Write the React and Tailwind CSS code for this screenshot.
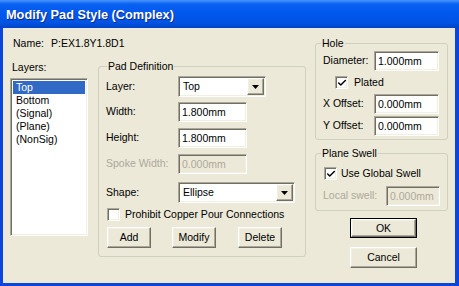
import { Check } from 'lucide-react';

const sunken =
  'border border-t-[#aca899] border-l-[#aca899] border-b-white border-r-white shadow-[inset_1px_1px_0_#716f64,inset_-1px_-1px_0_#f1efe2]';
const raised =
  'border border-t-white border-l-white border-b-[#716f64] border-r-[#716f64] shadow-[inset_-1px_-1px_0_#aca899,inset_1px_1px_0_#f1efe2]';

const LAYERS = ['Top', 'Bottom', '(Signal)', '(Plane)', '(NonSig)'];

function TextBox({ value, className = '', disabled }) {
  return (
    <div
      className={`${sunken} h-[20px] flex items-center pl-[3px] leading-none ${
        disabled ? 'bg-[#ece9d8] text-[#aca899]' : 'bg-white'
      } ${className}`}
    >
      {value}
    </div>
  );
}

function Combo({ value, className = '' }) {
  return (
    <div className={`${sunken} h-[21px] bg-white flex items-stretch p-[1px] ${className}`}>
      <div className="flex-1 flex items-center pl-[3px] leading-none">{value}</div>
      <div className={`${raised} w-[17px] bg-[#ece9d8] flex items-center justify-center`}>
        <svg width="7" height="4" viewBox="0 0 7 4">
          <path d="M0 0h7L3.5 4z" fill="#000" />
        </svg>
      </div>
    </div>
  );
}

function CheckBox({ checked }) {
  return (
    <div className={`${sunken} w-[13px] h-[13px] bg-white flex items-center justify-center`}>
      {checked && <Check size={10} strokeWidth={3.5} color="#000" />}
    </div>
  );
}

function Button({ children, className = '' }) {
  return (
    <div className={`${raised} h-[21px] bg-[#ece9d8] flex items-center justify-center leading-none ${className}`}>
      {children}
    </div>
  );
}

function Group({ title, className = '', legendClass = 'left-[5px]', children }) {
  return (
    <div className={`relative border border-[#d0d0bf] rounded-[3px] ${className}`}>
      <span className={`absolute -top-[7px] ${legendClass} px-[1px] bg-[#ece9d8] leading-[13px]`}>{title}</span>
      {children}
    </div>
  );
}

export default function App() {
  return (
    <div className="w-[459px] h-[286px] flex flex-col bg-[#0a46de] font-['Liberation_Sans',Arial,sans-serif] text-[10.5px] text-black">
      {/* Title bar */}
      <div className="h-[28px] shrink-0 flex items-center pl-[6px] pt-[2px] bg-[linear-gradient(180deg,#4a95ff_0%,#0a62f2_14%,#0058ee_45%,#0054e3_80%,#0044c6_100%)]">
        <span className="text-white font-bold text-[12.75px] [text-shadow:1px_1px_0_#0c2a8c]">
          Modify Pad Style (Complex)
        </span>
      </div>

      {/* Body */}
      <div className="flex-1 ml-[3px] mr-[4px] mb-[3px] bg-[#ece9d8] flex">
        <div className="flex flex-col pl-[7px] pt-[8px]">
          <div className="h-[14px] leading-[14px] ml-[3px] flex">
            <span className="w-[38px]">Name:</span>
            <span>P:EX1.8Y1.8D1</span>
          </div>

          <div className="flex items-start mt-[10px]">
            <div className="flex flex-col">
              <span className="h-[14px] leading-[14px] ml-[2px]">Layers:</span>
              <div className={`${sunken} mt-[4px] w-[78px] h-[158px] bg-white p-[2px]`}>
                {LAYERS.map((l, i) => (
                  <div
                    key={l}
                    className={`h-[13px] leading-[13px] pl-[3px] ${i === 0 ? 'bg-[#316ac5] text-white' : ''}`}
                  >
                    {l}
                  </div>
                ))}
              </div>
            </div>

            <Group title="Pad Definition" legendClass="left-[8px]" className="ml-[10px] mt-[6px] w-[208px] h-[191px] pl-[7px] pt-[9px]">
              <div className="flex items-center h-[21px]">
                <span className="w-[72px]">Layer:</span>
                <Combo value="Top" className="w-[88px]" />
              </div>
              <div className="flex items-center mt-[5px]">
                <span className="w-[72px]">Width:</span>
                <TextBox value="1.800mm" className="w-[69px]" />
              </div>
              <div className="flex items-center mt-[6px]">
                <span className="w-[72px]">Height:</span>
                <TextBox value="1.800mm" className="w-[69px]" />
              </div>
              <div className="flex items-center mt-[6px]">
                <span className="w-[72px] text-[#aca899]">Spoke Width:</span>
                <TextBox value="0.000mm" className="w-[69px]" disabled />
              </div>
              <div className="flex items-center mt-[8px]">
                <span className="w-[72px]">Shape:</span>
                <Combo value="Ellipse" className="w-[117px]" />
              </div>
              <div className="flex items-center mt-[5px] ml-[1px] h-[13px]">
                <CheckBox />
                <span className="ml-[5px]">Prohibit Copper Pour Connections</span>
              </div>
              <div className="flex mt-[6px] ml-[1px]">
                <Button className="w-[44px]">Add</Button>
                <Button className="w-[44px] ml-[21px]">Modify</Button>
                <Button className="w-[44px] ml-[22px]">Delete</Button>
              </div>
            </Group>
          </div>
        </div>

        <div className="flex flex-col ml-[9px] pt-[15px]">
          <Group title="Hole" className="w-[133px] h-[97px] pl-[7px] pt-[7px]">
            <div className="flex items-center">
              <span className="w-[51px]">Diameter:</span>
              <TextBox value="1.000mm" className="w-[65px]" />
            </div>
            <div className="flex items-center mt-[5px] ml-[12px] h-[13px]">
              <CheckBox checked />
              <span className="ml-[6px]">Plated</span>
            </div>
            <div className="flex items-center mt-[5px]">
              <span className="w-[51px]">X Offset:</span>
              <TextBox value="0.000mm" className="w-[65px]" />
            </div>
            <div className="flex items-center mt-[2px]">
              <span className="w-[51px]">Y Offset:</span>
              <TextBox value="0.000mm" className="w-[65px]" />
            </div>
          </Group>

          <Group title="Plane Swell" className="mt-[13px] w-[133px] h-[58px] pl-[8px] pt-[13px]">
            <div className="flex items-center h-[13px]">
              <CheckBox checked />
              <span className="ml-[4px]">Use Global Swell</span>
            </div>
            <div className="flex items-center mt-[6px] -ml-[1px]">
              <span className="w-[63px] text-[#aca899]">Local swell:</span>
              <TextBox value="0.000mm" className="w-[54px]" disabled />
            </div>
          </Group>

          <div className="mt-[7px] ml-[35px] w-[67px] h-[20px] border border-black">
            <Button className="h-full">OK</Button>
          </div>
          <Button className="mt-[9px] ml-[35px] w-[67px] h-[20px]">Cancel</Button>
        </div>
      </div>
    </div>
  );
}
